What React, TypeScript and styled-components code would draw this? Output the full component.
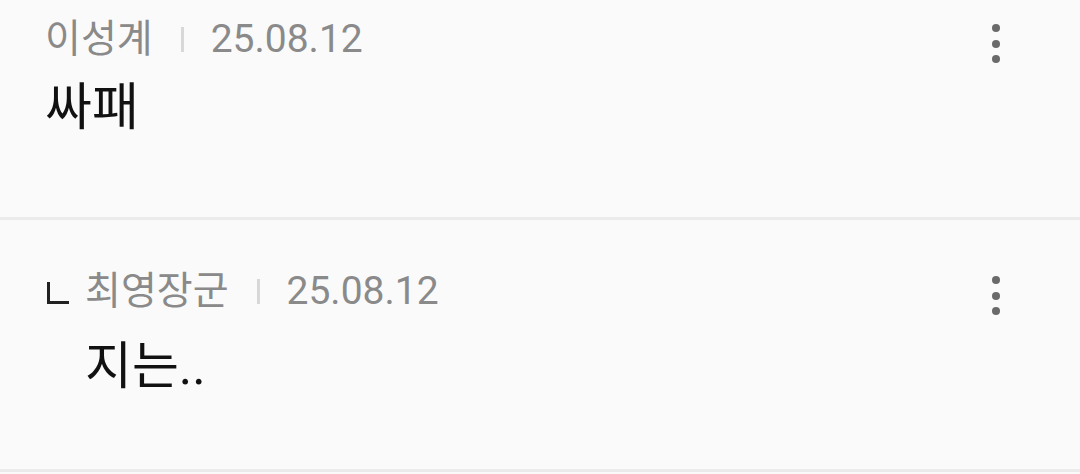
import React from "react";
import styled, { createGlobalStyle } from "styled-components";

const GlobalStyle = createGlobalStyle`
  html, body {
    margin: 0;
    padding: 0;
    background: #fafafa;
  }
  body {
    font-family: Roboto, "Noto Sans CJK KR", "Noto Sans", sans-serif;
    -webkit-font-smoothing: antialiased;
  }
`;

const List = styled.div`
  width: 1080px;
  display: flex;
  flex-direction: column;
  background: #fafafa;
`;

const CommentItem = styled.div<{ $top: number; $gap: number; $bottom: number }>`
  display: flex;
  align-items: flex-start;
  padding: ${(p) => p.$top}px 64px ${(p) => p.$bottom}px 45px;
  border-bottom: 3px solid #ebebeb;
  --gap: ${(p) => p.$gap}px;
`;

const Content = styled.div`
  flex: 1;
  display: flex;
  flex-direction: column;
  gap: var(--gap);
`;

const MetaRow = styled.div`
  display: flex;
  align-items: center;
  height: 46px;
  font-size: 39px;
  line-height: 46px;
  color: #8a8a8a;
`;

const ReplyMarker = styled.span`
  width: 40px;
  flex: none;
  display: flex;
  align-items: center;
  height: 46px;
  &::before {
    content: "";
    display: block;
    width: 19px;
    height: 19px;
    margin-top: 4px;
    margin-left: 2px;
    border-left: 3px solid #222;
    border-bottom: 3px solid #222;
  }
`;

const Name = styled.span``;

const Separator = styled.span`
  width: 3px;
  height: 25px;
  background: #d8d8d8;
  margin: 0 27px 0 28px;
`;

const DateText = styled.span``;

const Body = styled.div<{ $indent: number }>`
  padding-left: ${(p) => p.$indent}px;
  font-size: 51px;
  line-height: 60px;
  height: 60px;
  color: #111;
`;

const MoreButton = styled.button`
  width: 41px;
  margin-top: 8px;
  padding: 0;
  border: none;
  background: transparent;
  display: flex;
  flex-direction: column;
  align-items: center;
  gap: 7.7px;
  cursor: pointer;
`;

const Dot = styled.span`
  width: 8px;
  height: 8px;
  border-radius: 50%;
  background: #6a6a6a;
`;

type CommentProps = {
  name: string;
  date: string;
  text: string;
  reply?: boolean;
  top: number;
  gap: number;
  bottom: number;
};

function Comment({ name, date, text, reply, top, gap, bottom }: CommentProps) {
  return (
    <CommentItem $top={top} $gap={gap} $bottom={bottom}>
      <Content>
        <MetaRow>
          {reply && <ReplyMarker />}
          <Name>{name}</Name>
          <Separator />
          <DateText>{date}</DateText>
        </MetaRow>
        <Body $indent={reply ? 40 : 0}>{text}</Body>
      </Content>
      <MoreButton aria-label="더보기">
        <Dot />
        <Dot />
        <Dot />
      </MoreButton>
    </CommentItem>
  );
}

export default function App() {
  return (
    <>
      <GlobalStyle />
      <List>
        <Comment name="이성계" date="25.08.12" text="싸패" top={16} gap={16} bottom={79} />
        <Comment
          name="최영장군"
          date="25.08.12"
          text="지는.."
          reply
          top={48}
          gap={23}
          bottom={72}
        />
      </List>
    </>
  );
}
